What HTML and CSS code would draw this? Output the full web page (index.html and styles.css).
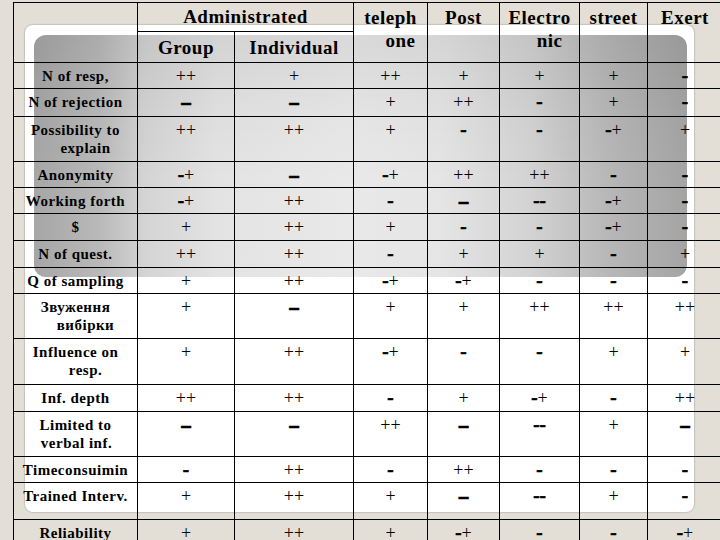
FILE: index.html
```html
<!DOCTYPE html>
<html>
<head>
<meta charset="utf-8">
<link rel="stylesheet" href="styles.css">
</head>
<body>
<div class="slide">
  <div class="frame"><div class="shade"></div></div>
  <table class="grid">
    <colgroup>
      <col class="c-name"><col class="c-grp"><col class="c-ind"><col class="c-tel"><col class="c-post"><col class="c-el"><col class="c-str"><col class="c-ex">
    </colgroup>
    <thead>
      <tr class="h1">
        <th rowspan="2"></th>
        <th colspan="2" class="adm">Administrated</th>
        <th rowspan="2" class="top">teleph<span class="l2">one</span></th>
        <th rowspan="2" class="top">Post</th>
        <th rowspan="2" class="top">Electro<span class="l2">nic</span></th>
        <th rowspan="2" class="top">street</th>
        <th rowspan="2" class="top">Exert</th>
      </tr>
      <tr class="h2">
        <th class="sub">Group</th>
        <th class="sub">Individual</th>
      </tr>
    </thead>
    <tbody>
      <tr class="r26"><th>N of resp,</th><td>++</td><td>+</td><td>++</td><td>+</td><td>+</td><td>+</td><td><b>-</b></td></tr>
      <tr class="r28"><th>N of rejection</th><td><b class="w">–</b></td><td><b class="w">–</b></td><td>+</td><td>++</td><td><b>-</b></td><td>+</td><td><b>-</b></td></tr>
      <tr class="r45"><th>Possibility to<span class="l2">explain</span></th><td>++</td><td>++</td><td>+</td><td><b>-</b></td><td><b>-</b></td><td><b>-</b>+</td><td>+</td></tr>
      <tr class="r26"><th>Anonymity</th><td><b>-</b>+</td><td><b class="w">–</b></td><td><b>-</b>+</td><td>++</td><td>++</td><td><b>-</b></td><td><b>-</b></td></tr>
      <tr class="r26"><th>Working forth</th><td><b>-</b>+</td><td>++</td><td><b>-</b></td><td><b class="w">–</b></td><td><b>--</b></td><td><b>-</b>+</td><td><b>-</b></td></tr>
      <tr class="r27"><th>$</th><td>+</td><td>++</td><td>+</td><td><b>-</b></td><td><b>-</b></td><td><b>-</b>+</td><td><b>-</b></td></tr>
      <tr class="r27"><th>N of quest.</th><td>++</td><td>++</td><td><b>-</b></td><td>+</td><td>+</td><td><b>-</b></td><td>+</td></tr>
      <tr class="r26"><th>Q of sampling</th><td>+</td><td>++</td><td><b>-</b>+</td><td><b>-</b>+</td><td><b>-</b></td><td><b>-</b></td><td><b>-</b></td></tr>
      <tr class="r45"><th>Звуження<span class="l2">вибірки</span></th><td>+</td><td><b class="w">–</b></td><td>+</td><td>+</td><td>++</td><td>++</td><td>++</td></tr>
      <tr class="r46"><th>Influence on<span class="l2">resp.</span></th><td>+</td><td>++</td><td><b>-</b>+</td><td><b>-</b></td><td><b>-</b></td><td>+</td><td>+</td></tr>
      <tr class="r27"><th>Inf. depth</th><td>++</td><td>++</td><td><b>-</b></td><td>+</td><td><b>-</b>+</td><td><b>-</b></td><td>++</td></tr>
      <tr class="r45"><th>Limited to<span class="l2 s">verbal inf.</span></th><td><b class="w">–</b></td><td><b class="w">–</b></td><td>++</td><td><b class="w">–</b></td><td><b>--</b></td><td>+</td><td><b class="w">–</b></td></tr>
      <tr class="r26"><th>Timeconsuimin</th><td><b>-</b></td><td>++</td><td><b>-</b></td><td>++</td><td><b>-</b></td><td><b>-</b></td><td><b>-</b></td></tr>
      <tr class="r37"><th>Trained Interv.</th><td>+</td><td>++</td><td>+</td><td><b class="w">–</b></td><td><b>--</b></td><td>+</td><td><b>-</b></td></tr>
      <tr class="r30"><th>Reliability</th><td>+</td><td>++</td><td>+</td><td><b>-</b>+</td><td><b>-</b></td><td><b>-</b></td><td><b>-</b>+</td></tr>
    </tbody>
  </table>
</div>
</body>
</html>
```
FILE: styles.css
```css
html, body {
  margin: 0;
  padding: 0;
  background: #e3dfd6;
}
.slide {
  width: 720px;
  height: 540px;
  overflow: hidden;
  display: grid;
  background: #e3dfd6;
  font-family: "Liberation Serif", "Times New Roman", serif;
  color: #000;
}
.frame {
  grid-area: 1 / 1;
  align-self: start;
  justify-self: start;
  margin: 25px 0 0 25px;
  width: 669px;
  height: 487px;
  background: #fff;
  border-radius: 8px;
  box-shadow: 0 0 1px 1px rgba(170, 165, 160, 0.5);
  display: flex;
  flex-direction: column;
}
.shade {
  margin: 10px 7px 0 9px;
  height: 242px;
  border-radius: 12px;
  background:
    linear-gradient(to bottom, rgba(0, 0, 0, 0.07) 0%, rgba(0, 0, 0, 0.02) 35%, rgba(0, 0, 0, 0) 60%),
    linear-gradient(to right, #a6a6a6 0%, #b9b9b9 10%, #d4d4d4 17%, #e3e3e3 28%, #e9e9e9 48%, #e5e5e5 62%, #d3d3d3 76%, #b7b7b7 88%, #a4a4a4 100%);
}
.grid {
  grid-area: 1 / 1;
  align-self: start;
  justify-self: start;
  margin: 2px 0 0 13px;
  border-collapse: collapse;
  table-layout: fixed;
  width: 709px;
}
.c-name { width: 124px; }
.c-grp { width: 97px; }
.c-ind { width: 119px; }
.c-tel { width: 74px; }
.c-post { width: 72px; }
.c-el { width: 80px; }
.c-str { width: 68px; }
.c-ex { width: 75px; }
th, td {
  border: 1px solid #000;
  padding: 0;
  text-align: center;
  vertical-align: top;
}
thead th {
  font-size: 19px;
  font-weight: bold;
  letter-spacing: 0.5px;
  line-height: 23px;
}
.h1 { height: 29px; }
.h2 { height: 31px; }
.adm { vertical-align: middle; padding-bottom: 1px; }
.top { padding-top: 3px; }
.sub { vertical-align: middle; padding-top: 1px; }
tbody th {
  font-size: 15px;
  font-weight: bold;
  letter-spacing: 0.5px;
  line-height: 18px;
  padding-top: 4px;
  white-space: nowrap;
}
tbody td {
  font-size: 18px;
  line-height: 18px;
  padding-top: 4px;
  white-space: nowrap;
}
.l2 {
  display: block;
  padding-left: 20px;
}
.l2.s { padding-left: 2px; }
b {
  font-size: 19px;
  font-weight: bold;
  -webkit-text-stroke: 0.6px #000;
}
b.w {
  font-family: "Liberation Sans", Arial, sans-serif;
  font-size: 20px;
  -webkit-text-stroke: 0.4px #000;
}
.r26 { height: 26px; }
.r27 { height: 27px; }
.r28 { height: 28px; }
.r30 { height: 30px; }
.r37 { height: 37px; }
.r45 { height: 45px; }
.r46 { height: 46px; }
```
